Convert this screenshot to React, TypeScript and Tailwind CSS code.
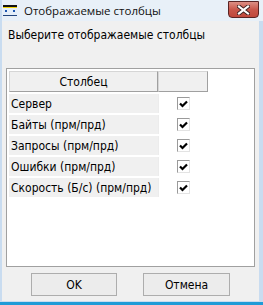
import React from 'react';

const rows = [
  'Сервер',
  'Байты (прм/прд)',
  'Запросы (прм/прд)',
  'Ошибки (прм/прд)',
  'Скорость (Б/с) (прм/прд)',
];

function WindowIcon() {
  return (
    <svg width="14" height="11" viewBox="0 0 14 11" className="block">
      <rect x="0" y="0" width="14" height="2" fill="#111" />
      <rect x="0" y="2" width="14" height="1" fill="#f2d40a" />
      <rect x="0" y="3" width="14" height="7" fill="#e4eef9" />
      <rect x="2" y="5" width="2" height="2" fill="#1d56b0" />
      <rect x="10" y="5" width="2" height="2" fill="#1d56b0" />
      <rect x="0" y="10" width="14" height="1" fill="#23457d" />
    </svg>
  );
}

function CloseButton() {
  return (
    <div className="w-[31px] h-[17px] rounded-b-[4px] border border-[#5a2424] bg-gradient-to-b from-[#dc8e84] via-[#c9574b] to-[#c0483c] flex items-center justify-center">
      <svg width="13" height="10" viewBox="0 0 13 10">
        <path d="M2 1.5 L11 8.5 M11 1.5 L2 8.5" stroke="#3b2020" strokeWidth="4" strokeLinecap="square" />
        <path d="M2 1.5 L11 8.5 M11 1.5 L2 8.5" stroke="#ffffff" strokeWidth="2.2" strokeLinecap="square" />
      </svg>
    </div>
  );
}

function CheckBox() {
  return (
    <div className="w-[13px] h-[13px] bg-white border-t border-l border-[#9a9a9a] border-r-[#e3e3e3] border-b-[#e3e3e3] border-r border-b flex items-center justify-center">
      <svg width="9" height="8" viewBox="0 0 9 8">
        <path d="M1 3.5 L3.5 6 L8 1.5" stroke="#000" strokeWidth="2.2" fill="none" />
      </svg>
    </div>
  );
}

export default function App() {
  return (
    <div className="w-[263px] h-[305px] flex flex-col bg-[#c9dcf0] border-b-[3px] border-[#1f9bd7] font-['DejaVu_Sans_Condensed','DejaVu_Sans',sans-serif] text-[12px] text-black">
      {/* title bar */}
      <div className="h-[21px] flex items-start bg-[#e8f0f8] border-l-2 border-[#c9dcf0] pr-[4px]">
        <div className="mt-[5px] ml-[1px]">
          <WindowIcon />
        </div>
        <span className="ml-[7px] mt-[3px] text-[11.5px] leading-[15px] text-[#111] font-['Open_Sans','Noto_Sans',sans-serif]">
          Отображаемые столбцы
        </span>
        <div className="ml-auto mt-[1px]">
          <CloseButton />
        </div>
      </div>

      {/* client area */}
      <div className="flex-1 flex flex-col bg-[#f0f0f0] ml-[2px] mr-[4px] mb-[1px]">
        <div className="pl-[6px] pt-[7px] leading-[14px]">Выберите отображаемые столбцы</div>

        <div className="mx-[4px] mt-[26px] h-[199px] border border-[#a0a0a0] bg-white p-[2px]">
          <div className="flex h-[21px]">
            <div className="w-[149px] bg-[#f0f0f0] border-t border-l border-[#d6d6d6] border-r-[#a0a0a0] border-b-[#a0a0a0] border-r border-b flex items-center justify-center">
              Столбец
            </div>
            <div className="w-[50px] bg-[#f0f0f0] border-t border-l border-[#d6d6d6] border-r-[#a0a0a0] border-b-[#a0a0a0] border-r border-b" />
          </div>
          {rows.map((r) => (
            <div key={r} className="flex h-[19px] mt-[2px]">
              <div className="w-[149px] bg-[#f0f0f0] pl-[2px] flex items-center overflow-hidden whitespace-nowrap">
                {r}
              </div>
              <div className="w-[50px] border-l border-[#ececec] flex items-center justify-center">
                <CheckBox />
              </div>
            </div>
          ))}
        </div>

        <div className="flex justify-center gap-[26px] mt-[6px]">
          <button className="w-[86px] h-[23px] border border-[#adadad] bg-[#ececec] flex items-center justify-center">
            OK
          </button>
          <button className="w-[87px] h-[23px] border border-[#adadad] bg-[#ececec] flex items-center justify-center">
            Отмена
          </button>
        </div>
      </div>
    </div>
  );
}
